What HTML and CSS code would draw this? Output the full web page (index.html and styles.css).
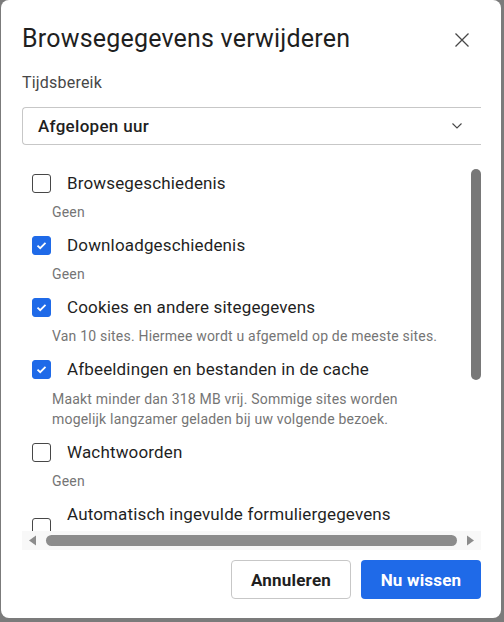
FILE: index.html
```html
<!DOCTYPE html>
<html lang="nl">
<head>
<meta charset="utf-8">
<link rel="stylesheet" href="styles.css">
</head>
<body>
<div class="dialog">
  <div class="header">
    <h1 class="title">Browsegegevens verwijderen</h1>
    <svg class="close" width="16" height="16" viewBox="0 0 16 16"><path d="M1.5 1.5 L14.5 14.5 M14.5 1.5 L1.5 14.5" stroke="#474747" stroke-width="1.3" fill="none"/></svg>
  </div>
  <div class="field-label">Tijdsbereik</div>
  <div class="select">
    <span class="select-text">Afgelopen uur</span>
    <svg class="chev" width="10" height="6" viewBox="0 0 10 6"><path d="M0.5 0.5 L5 5 L9.5 0.5" stroke="#474747" stroke-width="1.1" fill="none"/></svg>
  </div>
  <div class="scroller">
    <div class="list-wrap">
      <div class="list">
        <div class="item">
          <div class="row"><span class="cb"></span><span class="label">Browsegeschiedenis</span></div>
          <div class="sub">Geen</div>
        </div>
        <div class="item">
          <div class="row"><span class="cb on"><svg width="11" height="9" viewBox="0 0 11 9"><path d="M1.5 4.6 L4.2 7.2 L9.5 1.8" stroke="#fff" stroke-width="1.8" fill="none"/></svg></span><span class="label">Downloadgeschiedenis</span></div>
          <div class="sub">Geen</div>
        </div>
        <div class="item">
          <div class="row"><span class="cb on"><svg width="11" height="9" viewBox="0 0 11 9"><path d="M1.5 4.6 L4.2 7.2 L9.5 1.8" stroke="#fff" stroke-width="1.8" fill="none"/></svg></span><span class="label">Cookies en andere sitegegevens</span></div>
          <div class="sub">Van 10 sites. Hiermee wordt u afgemeld op de meeste sites.</div>
        </div>
        <div class="item">
          <div class="row"><span class="cb on"><svg width="11" height="9" viewBox="0 0 11 9"><path d="M1.5 4.6 L4.2 7.2 L9.5 1.8" stroke="#fff" stroke-width="1.8" fill="none"/></svg></span><span class="label">Afbeeldingen en bestanden in de cache</span></div>
          <div class="sub two">Maakt minder dan 318 MB vrij. Sommige sites worden<br>mogelijk langzamer geladen bij uw volgende bezoek.</div>
        </div>
        <div class="item">
          <div class="row"><span class="cb"></span><span class="label">Wachtwoorden</span></div>
          <div class="sub">Geen</div>
        </div>
        <div class="item">
          <div class="row"><span class="cb low"></span><span class="label">Automatisch ingevulde formuliergegevens</span></div>
        </div>
      </div>
      <div class="vbar"><div class="vthumb"></div></div>
    </div>
    <div class="hbar">
      <svg class="arrow" width="9" height="11" viewBox="0 0 9 11"><path d="M8 0.5 L8 10.5 L1 5.5 Z" fill="#8c8c8c"/></svg>
      <div class="hthumb"></div>
      <svg class="arrow" width="9" height="11" viewBox="0 0 9 11"><path d="M1 0.5 L1 10.5 L8 5.5 Z" fill="#8c8c8c"/></svg>
    </div>
  </div>
  <div class="actions">
    <button class="btn secondary">Annuleren</button>
    <button class="btn primary">Nu wissen</button>
  </div>
</div>
</body>
</html>
```
FILE: styles.css
```css
* { box-sizing: border-box; }
html, body { margin: 0; padding: 0; }
body {
  background: #7b7b7b;
  width: 504px;
  height: 622px;
  overflow: hidden;
  font-family: Roboto, "Noto Sans", sans-serif;
  color: #1f1f1f;
}
.dialog {
  margin-left: 1px;
  width: 500px;
  height: 618px;
  background: #fff;
  border-radius: 8px;
  padding: 22px 20px 0 20px;
  display: flex;
  flex-direction: column;
}
.header {
  display: flex;
  align-items: center;
  justify-content: space-between;
  height: 34px;
}
.title {
  margin: 0 0 0 1px;
  font-size: 25px;
  font-weight: 400;
  letter-spacing: 0.2px;
  line-height: 34px;
  color: #1f1f1f;
}
.close { margin-right: 11px; margin-top: 1px; }
.field-label {
  margin-top: 15px;
  margin-left: 1px;
  font-size: 16px;
  letter-spacing: 0.2px;
  line-height: 24px;
  color: #474747;
}
.select {
  margin-top: 12px;
  margin-left: 1px;
  height: 38px;
  border: 1px solid #c7c7c7;
  border-right: none;
  border-radius: 4px 0 0 4px;
  display: flex;
  align-items: center;
  justify-content: space-between;
  padding: 0 19px 0 15px;
}
.select-text { font-size: 17px; font-weight: 500; letter-spacing: 0.3px; color: #1f1f1f; }
.scroller {
  margin-top: 15px;
  margin-left: 1px;
  display: flex;
  flex-direction: column;
}
.list-wrap {
  height: 371px;
  display: flex;
  overflow: hidden;
}
.list {
  flex: 1;
  padding: 11px 0 0 10px;
  overflow: hidden;
  white-space: nowrap;
}
.item { margin-bottom: 11px; }
.row {
  display: flex;
  align-items: center;
  height: 24px;
}
.cb {
  width: 19px;
  height: 19px;
  border: 1.5px solid #474747;
  border-radius: 3px;
  flex: none;
  display: flex;
  align-items: center;
  justify-content: center;
}
.cb.on { background: #1f6ae8; border-color: #1f6ae8; }
.cb.low { margin-top: 26px; }
.label {
  margin-left: 16px;
  font-size: 17px;
  letter-spacing: 0.15px;
  line-height: 24px;
}
.sub {
  margin-top: 7px;
  margin-left: 20px;
  font-size: 14px;
  letter-spacing: 0.2px;
  line-height: 20px;
  color: #757575;
}
.sub.two { margin-top: 8px; }
.vbar { width: 10px; flex: none; padding-top: 9px; }
.vthumb { width: 10px; height: 211px; border-radius: 5px; background: #787878; }
.hbar {
  height: 19px;
  background: #f8f8f8;
  display: flex;
  align-items: center;
  padding: 0 6px;
  gap: 9px;
}
.hthumb { flex: 1; height: 11px; border-radius: 6px; background: #8c8c8c; }
.actions {
  margin-top: 10px;
  display: flex;
  justify-content: flex-end;
  gap: 10px;
}
.btn {
  width: 120px;
  height: 39px;
  border-radius: 4px;
  font-family: inherit;
  font-size: 17px;
  font-weight: 700;
  letter-spacing: 0.2px;
}
.secondary { background: #fff; border: 1px solid #c7c7c7; color: #1f1f1f; }
.primary { background: #1f6ae8; border: none; color: #fff; }
```
